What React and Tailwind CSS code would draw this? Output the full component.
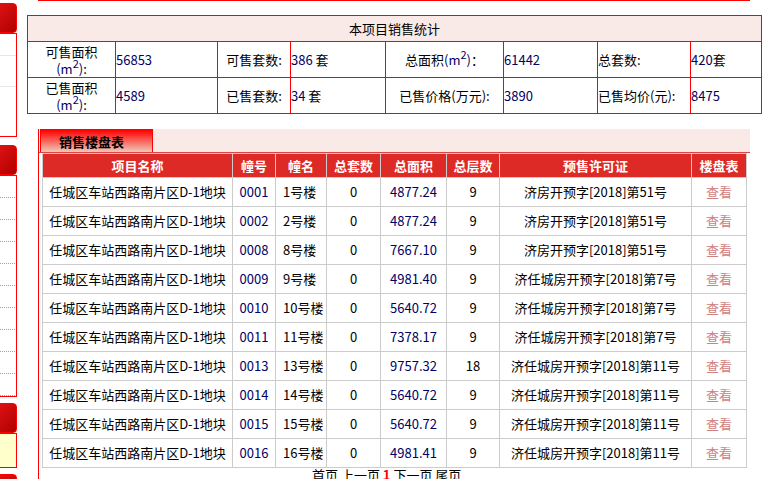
const rows = [
  ["0001","1号楼","4877.24","9","济房开预字[2018]第51号"],
  ["0002","2号楼","4877.24","9","济房开预字[2018]第51号"],
  ["0008","8号楼","7667.10","9","济房开预字[2018]第51号"],
  ["0009","9号楼","4981.40","9","济任城房开预字[2018]第7号"],
  ["0010","10号楼","5640.72","9","济任城房开预字[2018]第7号"],
  ["0011","11号楼","7378.17","9","济任城房开预字[2018]第7号"],
  ["0013","13号楼","9757.32","18","济任城房开预字[2018]第11号"],
  ["0014","14号楼","5640.72","9","济任城房开预字[2018]第11号"],
  ["0015","15号楼","5640.72","9","济任城房开预字[2018]第11号"],
  ["0016","16号楼","4981.41","9","济任城房开预字[2018]第11号"],
];
const Hdr = () => <div className="shrink-0 h-[30px] border border-[#ff0000] rounded-sm bg-[linear-gradient(135deg,#ff2020,#b00000)]" />;
const Dots = ({n}) => <div className="shrink-0 border border-[#ff0000] bg-white">{Array.from({length:n}).map((_,i)=><div key={i} className="h-[22px] border-b border-dotted border-gray-400 mx-[1px]" />)}</div>;
const M2 = () => <span className="text-[#000066]">(m<sup className="text-[11px] leading-none">2</sup>)</span>;
export default function App(){
  const f = {fontFamily:'"Noto Sans CJK SC","Liberation Sans",sans-serif'};
  return (
  <div className="w-[766px] h-[479px] overflow-hidden bg-white flex text-[12px] text-black" style={f}>
    <div className="shrink-0 flex flex-col mt-[3px] ml-[-35px] w-[52px]">
      <Hdr/>
      <div className="shrink-0 h-[104px] border border-[#ff0000] bg-white flex flex-col"><div className="h-[22px] border-b border-gray-200"/><div className="h-[31px] border-b border-gray-200"/></div>
      <div className="shrink-0 h-[8px]"/>
      <Hdr/>
      <Dots n={10}/>
      <div className="shrink-0 h-[6px]"/>
      <Hdr/>
      <div className="shrink-0 h-[35px] border border-[#ff0000] bg-[#ffffcc] flex items-center justify-end pr-[36px]">间</div>
      <div className="shrink-0 h-[6px]"/>
      <Hdr/>
    </div>
    <div className="ml-[10px] flex-1 flex flex-col">
      <div className="ml-[11px] w-[712px] h-[4px] border-x border-b border-[#ff0000] flex"><div className="w-[94px] bg-[#fbe8e6] border-r border-[#ff0000]"/><div className="w-[413px] border-r border-[#ff0000]"/></div>
      <table className="mt-[14px] w-[735px] border-collapse text-[13px]" >
        <tbody>
          <tr className="h-[26px] bg-[#f9e9e7]"><td colSpan={8} className="border border-[#ff0000] text-center">本项目销售统计</td></tr>
          <tr className="h-[36px]">
            <td className="w-[88px] border border-[#ff0000] text-center leading-[17px]">可售面积<br/><M2/>:</td>
            <td className="w-[102px] border border-[#ff0000] text-[#000066]">56853</td>
            <td className="w-[73px] border border-[#ff0000] text-center">可售套数:</td>
            <td className="w-[95px] border border-[#ff0000]"><span className="text-[#000066]">386</span> 套</td>
            <td className="w-[118px] border border-[#ff0000] text-center">总面积<M2/>：</td>
            <td className="w-[94px] border border-[#ff0000] text-[#000066]">61442</td>
            <td className="w-[93px] border border-[#ff0000]">总套数:</td>
            <td className="border border-[#ff0000]"><span className="text-[#000066]">420</span>套</td>
          </tr>
          <tr className="h-[36px]">
            <td className="border border-[#ff0000] text-center leading-[17px]">已售面积<br/><M2/>:</td>
            <td className="border border-[#ff0000] text-[#000066]">4589</td>
            <td className="border border-[#ff0000] text-center">已售套数:</td>
            <td className="border border-[#ff0000]"><span className="text-[#000066]">34</span> 套</td>
            <td className="border border-[#ff0000] text-center">已售价格(万元):</td>
            <td className="border border-[#ff0000] text-[#000066]">3890</td>
            <td className="border border-[#ff0000]">已售均价(元):</td>
            <td className="border border-[#ff0000] text-[#000066]">8475</td>
          </tr>
        </tbody>
      </table>
      <div className="mt-[15px] ml-[11px] w-[712px] border-l border-[#ff0000] flex flex-col">
        <div className="h-[24px] bg-[#f9e9e7] border-b border-[#d44] flex items-end pl-[1px]">
          <div className="w-[113px] h-[23px] border border-b-0 border-[#ff0000] bg-[linear-gradient(#ff0000,#f0c8b8)] font-bold text-[13px] text-center leading-[23px] pr-[10px]">销售楼盘表</div>
        </div>
        <table className="ml-[3px] w-[705px] border-collapse text-[13px]">
          <thead>
            <tr className="h-[24px] bg-[#dd2a26] text-white font-bold">
              {[["项目名称",190],["幢号",43],["幢名",51],["总套数",54],["总面积",66],["总层数",53],["预售许可证",192],["楼盘表",55]].map(([t,w])=>
                <th key={t} style={{width:w}} className="border border-[#ccc] font-bold">{t}</th>)}
            </tr>
          </thead>
          <tbody>
            {rows.map(r=>(
              <tr key={r[0]} className="h-[29px] text-center">
                <td className="border border-[#ccc]">任城区车站西路南片区D-1地块</td>
                <td className="border border-[#ccc] text-[#000066]">{r[0]}</td>
                <td className="border border-[#ccc] text-left pl-[7px]">{r[1]}</td>
                <td className="border border-[#ccc]">0</td>
                <td className="border border-[#ccc] text-[#000066]">{r[2]}</td>
                <td className="border border-[#ccc]">{r[3]}</td>
                <td className="border border-[#ccc]">{r[4]}</td>
                <td className="border border-[#ccc] text-[#d08080]">查看</td>
              </tr>
            ))}
          </tbody>
        </table>
        <div className="ml-[273px] text-[13px] leading-[14px]">首页 上一页 <b className="text-[#ff0000]">1</b> 下一页 尾页</div>
      </div>
    </div>
  </div>);
}
